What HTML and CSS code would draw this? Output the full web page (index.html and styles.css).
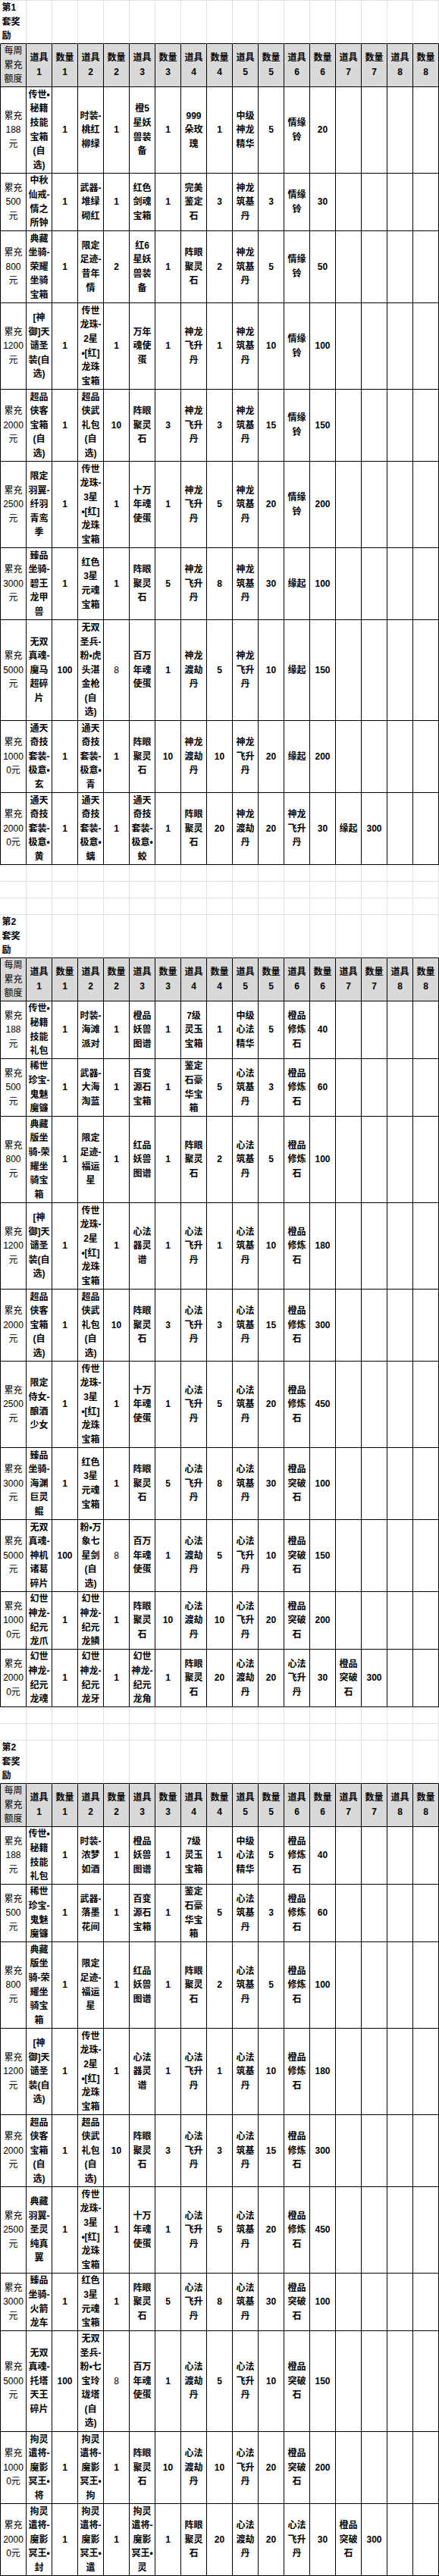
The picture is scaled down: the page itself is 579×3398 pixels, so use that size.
FILE: index.html
```html
<!DOCTYPE html>
<html lang="zh-CN">
<head>
<meta charset="utf-8">
<title>每周累充奖励</title>
<link rel="stylesheet" href="styles.css">
</head>
<body>
<table class="sheet">
<colgroup>
<col class="first"><col><col><col><col><col><col><col><col><col><col><col><col><col><col><col><col>
</colgroup>
<tbody>
<tr class="title r3"><td>第1套奖励</td><td></td><td></td><td></td><td></td><td></td><td></td><td></td><td></td><td></td><td></td><td></td><td></td><td></td><td></td><td></td><td></td></tr>
<tr class="head r3"><td>每周累充额度</td><td>道具1</td><td>数量1</td><td>道具2</td><td>数量2</td><td>道具3</td><td>数量3</td><td>道具4</td><td>数量4</td><td>道具5</td><td>数量5</td><td>道具6</td><td>数量6</td><td>道具7</td><td>数量7</td><td>道具8</td><td>数量8</td></tr>
<tr class="r6"><td>累充188元</td><td>传世•秘籍技能宝箱(自选)</td><td>1</td><td>时装-桃红柳绿</td><td>1</td><td>橙5星妖兽装备</td><td>1</td><td>999朵玫瑰</td><td>1</td><td>中级神龙精华</td><td>5</td><td>情缘铃</td><td>20</td><td></td><td></td><td></td><td></td></tr>
<tr class="r4"><td>累充500元</td><td>中秋仙戒-情之所钟</td><td>1</td><td>武器-堆绿砌红</td><td>1</td><td>红色剑魂宝箱</td><td>1</td><td>完美鉴定石</td><td>3</td><td>神龙筑基丹</td><td>3</td><td>情缘铃</td><td>30</td><td></td><td></td><td></td><td></td></tr>
<tr class="r5"><td>累充800元</td><td>典藏坐骑-荣耀坐骑宝箱</td><td>1</td><td>限定足迹-昔年情</td><td>2</td><td>红6星妖兽装备</td><td>1</td><td>阵眼聚灵石</td><td>2</td><td>神龙筑基丹</td><td>5</td><td>情缘铃</td><td>50</td><td></td><td></td><td></td><td></td></tr>
<tr class="r6"><td>累充1200元</td><td>[神御]天谴圣装(自选)</td><td>1</td><td>传世龙珠-<wbr>2星<wbr>•[红]龙珠宝箱</td><td>1</td><td>万年魂使蛋</td><td>1</td><td>神龙飞升丹</td><td>1</td><td>神龙筑基丹</td><td>10</td><td>情缘铃</td><td>100</td><td></td><td></td><td></td><td></td></tr>
<tr class="r5"><td>累充2000元</td><td>超品侠客宝箱(自选)</td><td>1</td><td>超品侠武礼包(自选)</td><td>10</td><td>阵眼聚灵石</td><td>3</td><td>神龙飞升丹</td><td>3</td><td>神龙筑基丹</td><td>15</td><td>情缘铃</td><td>150</td><td></td><td></td><td></td><td></td></tr>
<tr class="r6"><td>累充2500元</td><td>限定羽翼-纤羽青鸾季</td><td>1</td><td>传世龙珠-<wbr>3星<wbr>•[红]龙珠宝箱</td><td>1</td><td>十万年魂使蛋</td><td>1</td><td>神龙飞升丹</td><td>5</td><td>神龙筑基丹</td><td>20</td><td>情缘铃</td><td>200</td><td></td><td></td><td></td><td></td></tr>
<tr class="r5"><td>累充3000元</td><td>臻品坐骑-碧王龙甲兽</td><td>1</td><td>红色3星元魂宝箱</td><td>1</td><td>阵眼聚灵石</td><td>5</td><td>神龙飞升丹</td><td>8</td><td>神龙筑基丹</td><td>30</td><td>缘起</td><td>100</td><td></td><td></td><td></td><td></td></tr>
<tr class="r7"><td>累充5000元</td><td>无双真魂-魔马超碎片</td><td>100</td><td>无双圣兵-粉•虎头湛金枪(自选)</td><td class="nb">8</td><td>百万年魂使蛋</td><td>1</td><td>神龙渡劫丹</td><td>5</td><td>神龙飞升丹</td><td>10</td><td>缘起</td><td>150</td><td></td><td></td><td></td><td></td></tr>
<tr class="r5"><td>累充10000元</td><td>通天奇技套装-极意•玄</td><td>1</td><td>通天奇技套装-极意•青</td><td>1</td><td>阵眼聚灵石</td><td>10</td><td>神龙渡劫丹</td><td>10</td><td>神龙飞升丹</td><td>20</td><td>缘起</td><td>200</td><td></td><td></td><td></td><td></td></tr>
<tr class="r5"><td>累充20000元</td><td>通天奇技套装-极意•黄</td><td>1</td><td>通天奇技套装-极意•螭</td><td>1</td><td>通天奇技套装-极意•蛟</td><td>1</td><td>阵眼聚灵石</td><td>20</td><td>神龙渡劫丹</td><td>20</td><td>神龙飞升丹</td><td>30</td><td>缘起</td><td>300</td><td></td><td></td></tr>
<tr class="gap"><td></td><td></td><td></td><td></td><td></td><td></td><td></td><td></td><td></td><td></td><td></td><td></td><td></td><td></td><td></td><td></td><td></td></tr>
<tr class="gap"><td></td><td></td><td></td><td></td><td></td><td></td><td></td><td></td><td></td><td></td><td></td><td></td><td></td><td></td><td></td><td></td><td></td></tr>
<tr class="gap"><td></td><td></td><td></td><td></td><td></td><td></td><td></td><td></td><td></td><td></td><td></td><td></td><td></td><td></td><td></td><td></td><td></td></tr>
<tr class="title r3"><td>第2套奖励</td><td></td><td></td><td></td><td></td><td></td><td></td><td></td><td></td><td></td><td></td><td></td><td></td><td></td><td></td><td></td><td></td></tr>
<tr class="head r3"><td>每周累充额度</td><td>道具1</td><td>数量1</td><td>道具2</td><td>数量2</td><td>道具3</td><td>数量3</td><td>道具4</td><td>数量4</td><td>道具5</td><td>数量5</td><td>道具6</td><td>数量6</td><td>道具7</td><td>数量7</td><td>道具8</td><td>数量8</td></tr>
<tr class="r4"><td>累充188元</td><td>传世•秘籍技能礼包</td><td>1</td><td>时装-海滩派对</td><td>1</td><td>橙品妖兽图谱</td><td>1</td><td>7级灵玉宝箱</td><td>1</td><td>中级心法精华</td><td>5</td><td>橙品修炼石</td><td>40</td><td></td><td></td><td></td><td></td></tr>
<tr class="r4"><td>累充500元</td><td>稀世珍宝-鬼魅魔镰</td><td>1</td><td>武器-大海淘蓝</td><td>1</td><td>百变源石宝箱</td><td>1</td><td>鉴定石豪华宝箱</td><td>5</td><td>心法筑基丹</td><td>3</td><td>橙品修炼石</td><td>60</td><td></td><td></td><td></td><td></td></tr>
<tr class="r6"><td>累充800元</td><td>典藏版坐骑-荣耀坐骑宝箱</td><td>1</td><td>限定足迹-福运星</td><td>1</td><td>红品妖兽图谱</td><td>1</td><td>阵眼聚灵石</td><td>2</td><td>心法筑基丹</td><td>5</td><td>橙品修炼石</td><td>100</td><td></td><td></td><td></td><td></td></tr>
<tr class="r6"><td>累充1200元</td><td>[神御]天谴圣装(自选)</td><td>1</td><td>传世龙珠-<wbr>2星<wbr>•[红]龙珠宝箱</td><td>1</td><td>心法器灵谱</td><td>1</td><td>心法飞升丹</td><td>1</td><td>心法筑基丹</td><td>10</td><td>橙品修炼石</td><td>180</td><td></td><td></td><td></td><td></td></tr>
<tr class="r5"><td>累充2000元</td><td>超品侠客宝箱(自选)</td><td>1</td><td>超品侠武礼包(自选)</td><td>10</td><td>阵眼聚灵石</td><td>3</td><td>心法飞升丹</td><td>3</td><td>心法筑基丹</td><td>15</td><td>橙品修炼石</td><td>300</td><td></td><td></td><td></td><td></td></tr>
<tr class="r6"><td>累充2500元</td><td>限定侍女-酿酒少女</td><td>1</td><td>传世龙珠-<wbr>3星<wbr>•[红]龙珠宝箱</td><td>1</td><td>十万年魂使蛋</td><td>1</td><td>心法飞升丹</td><td>5</td><td>心法筑基丹</td><td>20</td><td>橙品修炼石</td><td>450</td><td></td><td></td><td></td><td></td></tr>
<tr class="r5"><td>累充3000元</td><td>臻品坐骑-海渊巨灵鲲</td><td>1</td><td>红色3星元魂宝箱</td><td>1</td><td>阵眼聚灵石</td><td>5</td><td>心法飞升丹</td><td>8</td><td>心法筑基丹</td><td>30</td><td>橙品突破石</td><td>100</td><td></td><td></td><td></td><td></td></tr>
<tr class="r5"><td>累充5000元</td><td>无双真魂-神机诸葛碎片</td><td>100</td><td>粉•万象七星剑(自选)</td><td class="nb">8</td><td>百万年魂使蛋</td><td>1</td><td>心法渡劫丹</td><td>5</td><td>心法飞升丹</td><td>10</td><td>橙品突破石</td><td>150</td><td></td><td></td><td></td><td></td></tr>
<tr class="r4"><td>累充10000元</td><td>幻世神龙-纪元龙爪</td><td>1</td><td>幻世神龙-纪元龙鳞</td><td>1</td><td>阵眼聚灵石</td><td>10</td><td>心法渡劫丹</td><td>10</td><td>心法飞升丹</td><td>20</td><td>橙品突破石</td><td>200</td><td></td><td></td><td></td><td></td></tr>
<tr class="r4"><td>累充20000元</td><td>幻世神龙-纪元龙魂</td><td>1</td><td>幻世神龙-纪元龙牙</td><td>1</td><td>幻世神龙-纪元龙角</td><td>1</td><td>阵眼聚灵石</td><td>20</td><td>心法渡劫丹</td><td>20</td><td>心法飞升丹</td><td>30</td><td>橙品突破石</td><td>300</td><td></td><td></td></tr>
<tr class="gap"><td></td><td></td><td></td><td></td><td></td><td></td><td></td><td></td><td></td><td></td><td></td><td></td><td></td><td></td><td></td><td></td><td></td></tr>
<tr class="gap"><td></td><td></td><td></td><td></td><td></td><td></td><td></td><td></td><td></td><td></td><td></td><td></td><td></td><td></td><td></td><td></td><td></td></tr>
<tr class="title r3"><td>第2套奖励</td><td></td><td></td><td></td><td></td><td></td><td></td><td></td><td></td><td></td><td></td><td></td><td></td><td></td><td></td><td></td><td></td></tr>
<tr class="head r3"><td>每周累充额度</td><td>道具1</td><td>数量1</td><td>道具2</td><td>数量2</td><td>道具3</td><td>数量3</td><td>道具4</td><td>数量4</td><td>道具5</td><td>数量5</td><td>道具6</td><td>数量6</td><td>道具7</td><td>数量7</td><td>道具8</td><td>数量8</td></tr>
<tr class="r4"><td>累充188元</td><td>传世•秘籍技能礼包</td><td>1</td><td>时装-浓梦如酒</td><td>1</td><td>橙品妖兽图谱</td><td>1</td><td>7级灵玉宝箱</td><td>1</td><td>中级心法精华</td><td>5</td><td>橙品修炼石</td><td>40</td><td></td><td></td><td></td><td></td></tr>
<tr class="r4"><td>累充500元</td><td>稀世珍宝-鬼魅魔镰</td><td>1</td><td>武器-落墨花间</td><td>1</td><td>百变源石宝箱</td><td>1</td><td>鉴定石豪华宝箱</td><td>5</td><td>心法筑基丹</td><td>3</td><td>橙品修炼石</td><td>60</td><td></td><td></td><td></td><td></td></tr>
<tr class="r6"><td>累充800元</td><td>典藏版坐骑-荣耀坐骑宝箱</td><td>1</td><td>限定足迹-福运星</td><td>1</td><td>红品妖兽图谱</td><td>1</td><td>阵眼聚灵石</td><td>2</td><td>心法筑基丹</td><td>5</td><td>橙品修炼石</td><td>100</td><td></td><td></td><td></td><td></td></tr>
<tr class="r6"><td>累充1200元</td><td>[神御]天谴圣装(自选)</td><td>1</td><td>传世龙珠-<wbr>2星<wbr>•[红]龙珠宝箱</td><td>1</td><td>心法器灵谱</td><td>1</td><td>心法飞升丹</td><td>1</td><td>心法筑基丹</td><td>10</td><td>橙品修炼石</td><td>180</td><td></td><td></td><td></td><td></td></tr>
<tr class="r5"><td>累充2000元</td><td>超品侠客宝箱(自选)</td><td>1</td><td>超品侠武礼包(自选)</td><td>10</td><td>阵眼聚灵石</td><td>3</td><td>心法飞升丹</td><td>3</td><td>心法筑基丹</td><td>15</td><td>橙品修炼石</td><td>300</td><td></td><td></td><td></td><td></td></tr>
<tr class="r6"><td>累充2500元</td><td>典藏羽翼-圣灵纯真翼</td><td>1</td><td>传世龙珠-<wbr>3星<wbr>•[红]龙珠宝箱</td><td>1</td><td>十万年魂使蛋</td><td>1</td><td>心法飞升丹</td><td>5</td><td>心法筑基丹</td><td>20</td><td>橙品修炼石</td><td>450</td><td></td><td></td><td></td><td></td></tr>
<tr class="r4"><td>累充3000元</td><td>臻品坐骑-火箭龙车</td><td>1</td><td>红色3星元魂宝箱</td><td>1</td><td>阵眼聚灵石</td><td>5</td><td>心法飞升丹</td><td>8</td><td>心法筑基丹</td><td>30</td><td>橙品突破石</td><td>100</td><td></td><td></td><td></td><td></td></tr>
<tr class="r7"><td>累充5000元</td><td>无双真魂-托塔天王碎片</td><td>100</td><td>无双圣兵-粉•七宝玲珑塔(自选)</td><td class="nb">8</td><td>百万年魂使蛋</td><td>1</td><td>心法渡劫丹</td><td>5</td><td>心法飞升丹</td><td>10</td><td>橙品突破石</td><td>150</td><td></td><td></td><td></td><td></td></tr>
<tr class="r5"><td>累充10000元</td><td>拘灵遣将-魔影冥王•将</td><td>1</td><td>拘灵遣将-魔影冥王•拘</td><td>1</td><td>阵眼聚灵石</td><td>10</td><td>心法渡劫丹</td><td>10</td><td>心法飞升丹</td><td>20</td><td>橙品突破石</td><td>200</td><td></td><td></td><td></td><td></td></tr>
<tr class="r5"><td>累充20000元</td><td>拘灵遣将-魔影冥王•封</td><td>1</td><td>拘灵遣将-魔影冥王•遣</td><td>1</td><td>拘灵遣将-魔影冥王•灵</td><td>1</td><td>阵眼聚灵石</td><td>20</td><td>心法渡劫丹</td><td>20</td><td>心法飞升丹</td><td>30</td><td>橙品突破石</td><td>300</td><td></td><td></td></tr>
</tbody>
</table>
</body>
</html>
```
FILE: styles.css
```css
html, body {
  margin: 0;
  padding: 0;
  background: #ffffff;
}

.sheet {
  border-collapse: separate;
  border-spacing: 0;
  table-layout: fixed;
  width: 579px;
  border-top: 1px solid #e1e1e1;
  font-family: "Liberation Sans", "Noto Sans CJK SC", sans-serif;
  font-size: 12px;
  font-weight: 700;
  line-height: 18.6px;
  color: #000000;
}

.sheet col {
  width: 34px;
}

.sheet col.first {
  width: 35px;
}

.sheet td {
  padding: 0 1.5px;
  border-right: 1px solid #000000;
  border-bottom: 1px solid #000000;
  text-align: center;
  vertical-align: middle;
  overflow-wrap: break-word;
}

.sheet td:first-child {
  border-left: 1px solid #000000;
  font-weight: 400;
}

.sheet td.nb {
  font-weight: 400;
}

.r3 { height: 57px; }
.r4 { height: 76px; }
.r5 { height: 95px; }
.r6 { height: 114px; }
.r7 { height: 133px; }

.title td {
  border-right-color: #e1e1e1;
}

.title td:first-child {
  border-left-color: #ffffff;
  text-align: left;
  font-weight: 700;
}

.head td {
  background: #d9d9d9;
}

.gap {
  height: 22px;
}

.gap td {
  border-right-color: #e1e1e1;
  border-bottom-color: #e1e1e1;
}

.gap td:first-child {
  border-left-color: #ffffff;
}
```
